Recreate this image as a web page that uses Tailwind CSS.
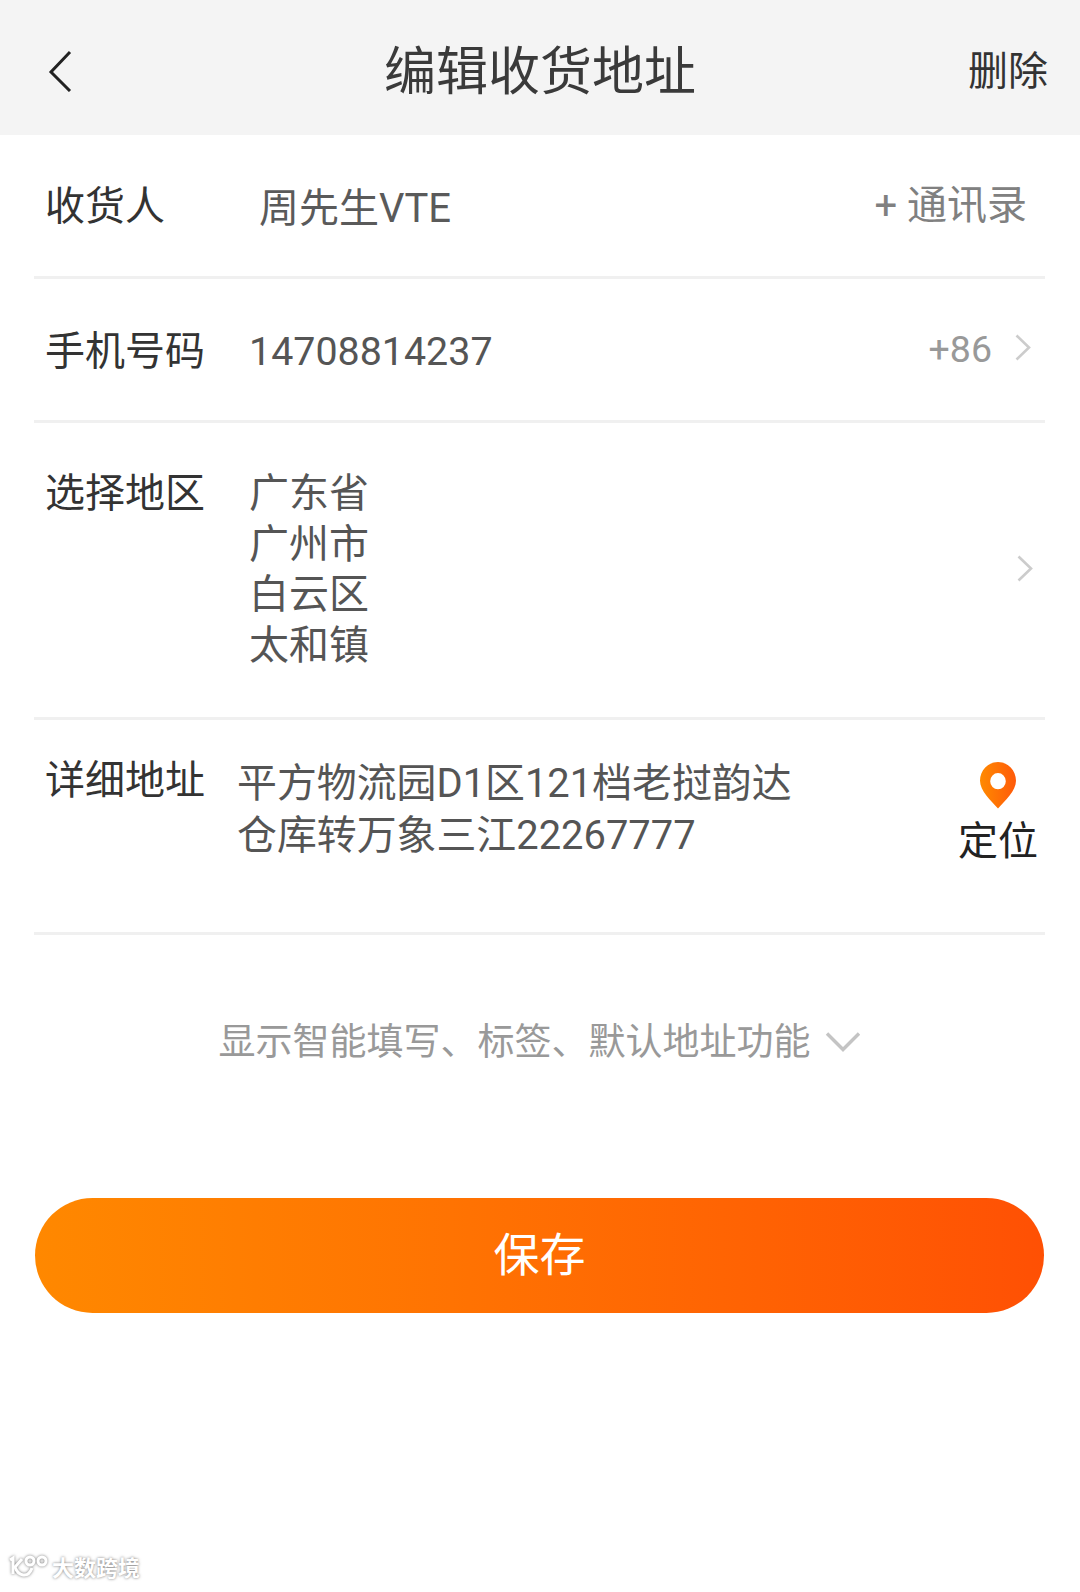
<!DOCTYPE html>
<html lang="zh-CN">
<head>
    <meta charset="UTF-8">
    <meta name="viewport" content="width=device-width, initial-scale=1.0">
    <title>编辑收货地址</title>
    <script src="https://cdn.jsdelivr.net/npm/@tailwindcss/browser@4"></script>
</head>
<body class="bg-white w-[1080px] h-[1592px] overflow-hidden relative font-['Roboto','Noto_Sans_CJK_SC',sans-serif] text-[40px] text-[#333]">
    <!-- Header -->
    <header class="h-[135px] bg-[#f4f4f4] flex items-center pl-[46px] pr-[32px]">
        <div class="w-[120px] pt-[6px]">
            <svg class="w-[28px] h-[42px]" viewBox="0 0 28 42" fill="none" stroke="#222" stroke-width="3"><path d="M24 2 L5 22 L24 41"/></svg>
        </div>
        <h1 class="flex-1 text-center text-[52px] leading-[70px] text-[#3a3a3a] pr-[14px] mt-[11px]">编辑收货地址</h1>
        <span class="w-[120px] text-right text-[40px] leading-[60px] text-[#333] mt-[9px]">删除</span>
    </header>

    <main class="pl-[34px] pr-[35px]">
        <!-- Receiver -->
        <div class="h-[144px] border-b-[3px] border-[#f0f0f0] flex items-start pt-[43px] pl-[11px] pr-[18px]">
            <span class="w-[214px] leading-[56px] text-[#333] mt-[1px]">收货人</span>
            <span class="leading-[56px] mt-[3px] text-[#5a5a5a]">周先生VTE</span>
            <span class="ml-auto leading-[56px] text-[#808080]">+ 通讯录</span>
        </div>

        <!-- Phone -->
        <div class="h-[144px] border-b-[3px] border-[#f0f0f0] flex items-start pt-[43px] pl-[11px] pr-[14px]">
            <span class="w-[204px] leading-[56px] text-[#333] mt-[2px]">手机号码</span>
            <span class="leading-[56px] mt-[2px] text-[39.4px] text-[#555]">14708814237</span>
            <span class="ml-auto leading-[56px] text-[37.500px] text-[#999] mt-[-1px]">+86</span>
            <svg class="ml-[23px] mt-[12px] w-[16px] h-[27px]" viewBox="0 0 16 27" fill="none" stroke="#ccc" stroke-width="2.6"><path d="M1.5 1.5 L14 13.5 L1.5 25.5"/></svg>
        </div>

        <!-- Region -->
        <div class="h-[297px] border-b-[3px] border-[#f0f0f0] flex items-start pt-[41px] pl-[11px] pr-[12px]">
            <span class="w-[204px] leading-[56px] text-[#333] mt-[2px]">选择地区</span>
            <div class="leading-[50.5px] mt-[5px] text-[#555]">
                <div>广东省</div>
                <div>广州市</div>
                <div>白云区</div>
                <div>太和镇</div>
            </div>
            <svg class="ml-auto mt-[91px] w-[16px] h-[27px]" viewBox="0 0 16 27" fill="none" stroke="#ccc" stroke-width="2.6"><path d="M1.5 1.5 L14 13.5 L1.5 25.5"/></svg>
        </div>

        <!-- Detail address -->
        <div class="h-[215px] border-b-[3px] border-[#f0f0f0] flex items-start pt-[33px] pl-[11px] pr-[7px]">
            <span class="w-[192px] leading-[56px] text-[#333] shrink-0">详细地址</span>
            <div class="leading-[52px] mt-[5px] text-[#555] w-[600px] text-[39.9px]">
                <div>平方物流园D1区121档老挝韵达</div>
                <div>仓库转万象三江22267777</div>
            </div>
            <div class="ml-auto flex flex-col items-center mt-[8px]">
                <svg class="w-[38px] h-[48px]" viewBox="0 0 38 46" preserveAspectRatio="none">
                    <defs><linearGradient id="pin" x1="0" x2="1" y1="0" y2="0"><stop offset="0" stop-color="#ff8a00"/><stop offset="1" stop-color="#ff5a0a"/></linearGradient></defs>
                    <path fill="url(#pin)" fill-rule="evenodd" d="M19 1 C9 1 1 9 1 19 C1 29 12 38 19 45.500 C26 38 37 29 37 19 C37 9 29 1 19 1 Z M19 11.500 A7.800 7.800 0 1 1 19 27.100 A7.800 7.800 0 1 1 19 11.500 Z"/>
                </svg>
                <span class="leading-[56px] mt-[5px] text-[#222]">定位</span>
            </div>
        </div>

        <!-- Toggle -->
        <div class="h-[218px] flex items-center justify-center pb-[2px] text-[37px] text-[#999]">
            <span>显示智能填写、标签、默认地址功能</span>
            <svg class="ml-[14px] w-[36px] h-[22px] mt-[-3px]" viewBox="0 0 36 22" fill="none" stroke="#c4c4c4" stroke-width="3.4"><path d="M2 2.500 L18 18.500 L34 2.500"/></svg>
        </div>

        <!-- Save -->
        <button class="mt-[45px] w-[1009px] ml-[1px] h-[115px] rounded-full bg-gradient-to-r from-[#ff8800] to-[#ff5004] text-white text-[46px] flex items-center justify-center">保存</button>
    </main>

    <!-- Watermark -->
    <div class="absolute left-[6px] bottom-[8px] flex items-center gap-[2px] text-white text-[22px] font-bold leading-[30px] [text-shadow:0_0_3px_#777]">
        <svg class="w-[44px] h-[30px]" viewBox="0 0 44 30" fill="none" stroke="#fff" stroke-width="3" style="filter: drop-shadow(0 0 1.500px #777)">
            <path d="M4 6 L7 4 V20"/>
            <path d="M16 5 L9 13 C12 22 22 25 26 14"/>
            <circle cx="24" cy="7" r="4"/>
            <circle cx="36" cy="7" r="4"/>
        </svg>
        <span>大数跨境</span>
    </div>
</body>
</html>
